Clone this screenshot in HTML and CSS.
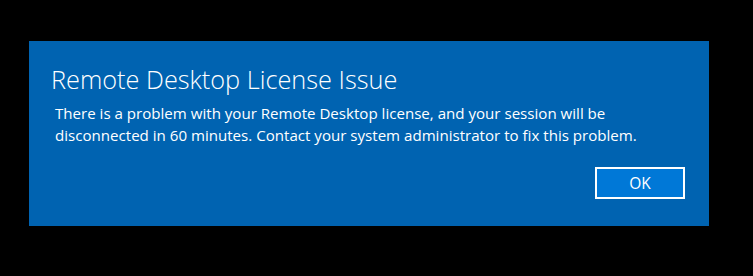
FILE: index.html
```html
<!DOCTYPE html>
<html lang="en">
<head>
    <meta charset="UTF-8">
    <title>Remote Desktop License Issue</title>
    <link rel="stylesheet" href="styles.css">
</head>
<body>
    <div class="dialog">
        <h1 class="dialog-title">Remote Desktop License Issue</h1>
        <p class="dialog-text">
            There is a problem with your Remote Desktop license, and your session will be<br>
            disconnected in 60 minutes. Contact your system administrator to fix this problem.
        </p>
        <div class="dialog-actions">
            <button class="button">OK</button>
        </div>
    </div>
</body>
</html>
```

FILE: styles.css
```css
body {
    margin: 0;
    width: 753px;
    height: 276px;
    background-color: #000;
    font-family: 'Open Sans', 'Noto Sans', sans-serif;
    color: #fff;
    padding: 41px 0 0 29px;
    box-sizing: border-box;
}
.dialog {
    width: 680px;
    height: 185px;
    background-color: #0063b1;
    padding: 20px 24px 0 22px;
    box-sizing: border-box;
}
.dialog-title {
    font-weight: 300;
    font-size: 25.3px;
    line-height: 36px;
    margin: 0;
}
.dialog-text {
    font-size: 15.1px;
    line-height: 22px;
    margin: 5px 0 0 4px;
}
.dialog-actions {
    display: flex;
    justify-content: flex-end;
    margin-top: 21px;
}
.button {
    width: 90px;
    height: 32px;
    background-color: #0078d7;
    border: 2px solid #fff;
    color: #fff;
    font-family: inherit;
    font-size: 15.5px;
    padding: 0;
}
```
